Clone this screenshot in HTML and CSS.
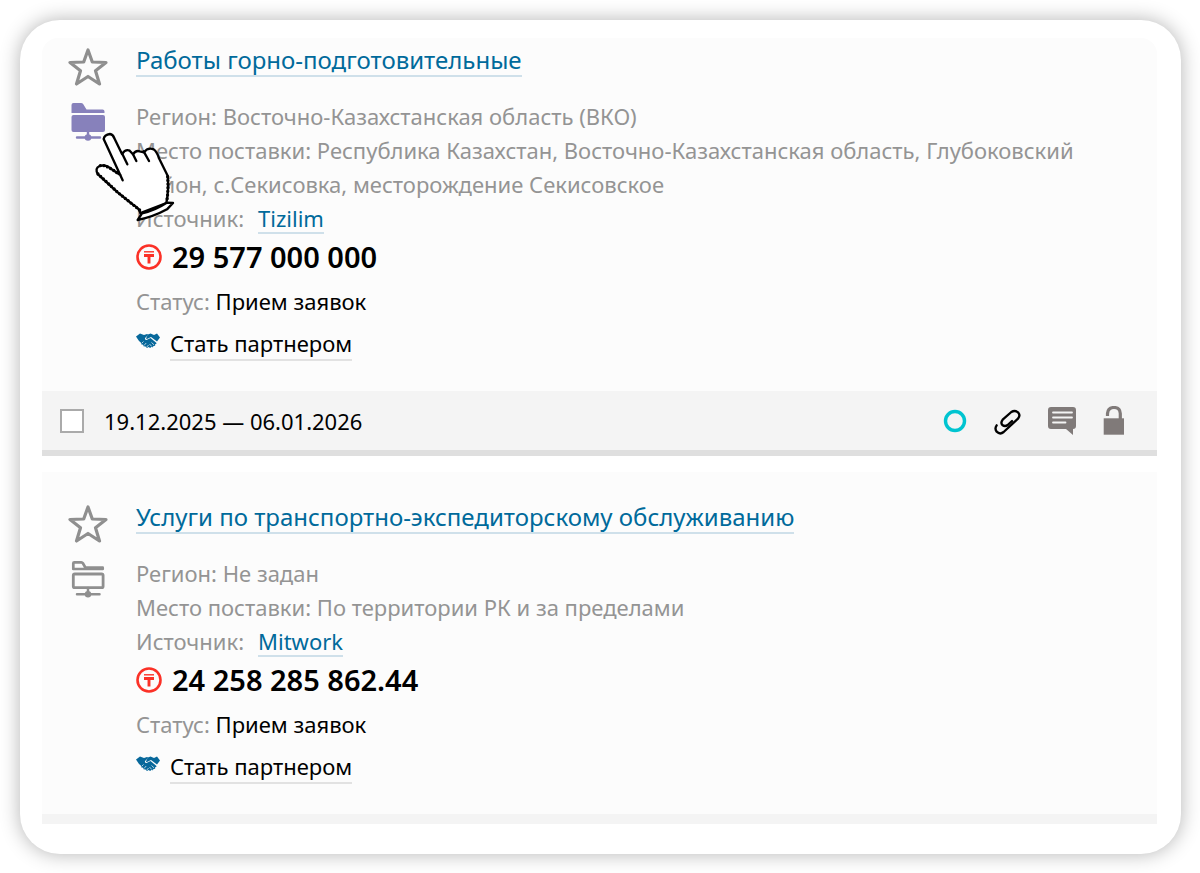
FILE: index.html
```html
<!DOCTYPE html>
<html lang="ru">
<head>
<meta charset="utf-8">
<meta name="viewport" content="width=device-width, initial-scale=1">
<title>Тендеры</title>
<link rel="stylesheet" href="styles.css">
</head>
<body>
<svg class="sprite" aria-hidden="true">
  <symbol id="star" viewBox="0 0 40 38">
    <path d="M20 2 24.300 14 38 14.500 27.500 22.800 31.500 36 20 28.500 8.500 36 12.500 22.800 2 14.500 15.700 14Z" fill="none" stroke="currentColor" stroke-width="3.200" stroke-linejoin="round"/>
  </symbol>
  <symbol id="folder" viewBox="0 0 36 40">
    <path d="M3.300 9.500V4.300q0-1 1-1h7q1 0 1.600 1l2.600 4.400H32.700v1.300H3.300Z" fill="none" stroke="currentColor" stroke-width="2.700" stroke-linejoin="round"/>
    <rect x="3.300" y="15" width="29.800" height="13.700" rx="1.500" fill="none" stroke="currentColor" stroke-width="2.800"/>
    <path d="M18 29v5M7 35.300h22.500" stroke="currentColor" stroke-width="2.500" stroke-linecap="round"/>
    <circle cx="18" cy="35.300" r="3.200" fill="currentColor"/>
  </symbol>
  <symbol id="folder-full" viewBox="0 0 36 40">
    <path d="M1.500 11V3q0-2 2-2h7.500q1.500 0 2.300 1.300L16.500 7.500h16q2 0 2 2V11Z" fill="currentColor"/>
    <rect x="1.500" y="13" width="33.500" height="17" rx="2" fill="currentColor"/>
    <path d="M18 29v5M7 35.500h23" stroke="currentColor" stroke-width="2.400" stroke-linecap="round"/>
    <circle cx="18" cy="35.500" r="3.300" fill="currentColor"/>
  </symbol>
  <symbol id="tenge" viewBox="0 0 26 26">
    <circle cx="13" cy="13" r="11.500" fill="none" stroke="currentColor" stroke-width="2.600"/>
    <path d="M8 7.800h10" stroke="currentColor" stroke-width="1.400"/>
    <path d="M8 11.500h10M13 11v8.500" stroke="currentColor" stroke-width="2.900"/>
  </symbol>
  <symbol id="hands" viewBox="0 0 24 16">
    <path d="M0 3.500 4 .5l4 1.500 3-1 1.500.7L9 5q-.5 2 1.500 2l4-2 6 5q0 1.500-1.500 1.300l.2 1.400-1.800.2-.4 1.300-1.800-.2-1 1-1.700-1-1.500 1-1.500-1.500-2-.3-.4-1.500-2-.5-.3-1.700L3 8Z" fill="currentColor"/>
    <path d="m12 1.500 2.500-1L18 2l3-1.500L24 4.500l-3 4L15 4l-4 2q-1.500 0-.7-1.300Z" fill="currentColor"/>
    <path d="m5.500 10.500 2-2M8 12.500l2.200-2.500M10.800 14l1.700-2M13.500 11l2.300 2.500M15.500 9.500l2.500 2.300" stroke="#fcfcfc" stroke-width=".7"/>
  </symbol>
</svg>

<main class="panel">
  <article class="tender tender-first">
    <div class="tender-body">
      <div class="tools">
        <button class="tool" type="button" aria-label="В избранное"><svg class="star"><use href="#star"/></svg></button>
        <button class="tool tool-active" type="button" aria-label="Добавить в папку"><svg class="folder"><use href="#folder-full"/></svg></button>
      </div>
      <div class="info">
        <h2 class="title"><a class="link" href="#">Работы горно-подготовительные</a></h2>
        <p class="line">Регион: Восточно-Казахстанская область (ВКО)</p>
        <p class="line">Место поставки: Республика Казахстан, Восточно-Казахстанская область, Глубоковский район, с.Секисовка, месторождение Секисовское</p>
        <p class="line source"><span>Источник:</span><a class="link" href="#">Tizilim</a></p>
        <p class="price"><svg class="tenge"><use href="#tenge"/></svg><span>29 577 000 000</span></p>
        <p class="status">Статус: <span class="value">Прием заявок</span></p>
        <p class="partner"><svg class="hands"><use href="#hands"/></svg><a class="link link-dark" href="#">Стать партнером</a></p>
      </div>
    </div>
    <footer class="bar">
      <label class="period"><input class="check" type="checkbox"><span>19.12.2025 — 06.01.2026</span></label>
      <div class="actions">
        <button class="action" type="button" aria-label="Статус"><svg width="24" height="24" viewBox="0 0 24 24"><circle cx="12" cy="12" r="9.500" fill="none" stroke="#00c4d0" stroke-width="3.400"/></svg></button>
        <button class="action" type="button" aria-label="Ссылка"><svg width="28" height="28" viewBox="12 18 84 84"><path d="M23 73Q16 83 23 92 33 102 44 93L87 53Q95 43 88 35 78 26 67 33L41 56Q34 65 40 72 48 78 56 72L69 60" fill="none" stroke="#000" stroke-width="7" stroke-linecap="round" stroke-linejoin="round"/></svg></button>
        <button class="action" type="button" aria-label="Комментарии"><svg width="30" height="30" viewBox="0 0 30 30"><path d="M4 1h22q3 0 3 3v16q0 3-3 3v6l-7-6H4q-3 0-3-3V4q0-3 3-3Z" fill="#807a79"/><path d="M6 6.500h19M6 11.500h19M6 16.500h12.500" stroke="#f4f4f4" stroke-width="1.800" stroke-linecap="round"/></svg></button>
        <button class="action" type="button" aria-label="Доступ"><svg width="22" height="30" viewBox="0 0 22 30"><path d="M4.500 10V7.500Q5 1.500 11 1.500T17.300 7.500V13" fill="none" stroke="#807a79" stroke-width="3.200"/><path d="M.7 12.300h20.300v16.400H.7Z" fill="#807a79"/></svg></button>
      </div>
    </footer>
    <svg class="pointer" viewBox="130 300 249 279" aria-hidden="true">
      <g fill="#fff" stroke="#000" stroke-width="7" stroke-linejoin="round" stroke-linecap="round">
        <path d="M219 451 162 327Q164 314 181 312 190 313 194 325L217 372Q228 356 240 362L250 373Q258 360 270 364L283 367Q294 351 312 358 322 365 328 385L354 437Q358 480 350 519L272 549Q269 534 250 524L204 487 145 433Q134 415 150 408 168 402 185 417L213 436"/>
        <path d="m217 370 16 33M250 373l10 20M282 364l16 29" fill="none"/>
        <path d="M264 570 277 550Q318 540 351 518L370 519 352 538Q310 561 264 570Z"/>
        <path d="M145 432 204 487 250 524 270 540M354 440Q357 480 351 515M152 407Q168 402 210 434" fill="none" stroke-width="10" stroke-dasharray="0 11"/>
      </g>
    </svg>
  </article>

  <article class="tender tender-next">
    <div class="tender-body">
      <div class="tools">
        <button class="tool" type="button" aria-label="В избранное"><svg class="star"><use href="#star"/></svg></button>
        <button class="tool" type="button" aria-label="Добавить в папку"><svg class="folder"><use href="#folder"/></svg></button>
      </div>
      <div class="info">
        <h2 class="title"><a class="link" href="#">Услуги по транспортно-экспедиторскому обслуживанию</a></h2>
        <p class="line">Регион: Не задан</p>
        <p class="line">Место поставки: По территории РК и за пределами</p>
        <p class="line source"><span>Источник:</span><a class="link" href="#">Mitwork</a></p>
        <p class="price"><svg class="tenge"><use href="#tenge"/></svg><span>24 258 285 862.44</span></p>
        <p class="status">Статус: <span class="value">Прием заявок</span></p>
        <p class="partner"><svg class="hands"><use href="#hands"/></svg><a class="link link-dark" href="#">Стать партнером</a></p>
      </div>
    </div>
    <div class="bar-edge"></div>
  </article>
</main>
</body>
</html>
```
FILE: styles.css
```css
* { box-sizing: border-box; }

body {
  margin: 0;
  padding: 20px 19px 20px 20px;
  background: #fff;
  color: #000;
  font: 22px/34px "Noto Sans", "Open Sans", sans-serif;
}

h2, p { margin: 0; }

button {
  padding: 0;
  border: 0;
  background: none;
  cursor: pointer;
}

svg { display: block; }

.sprite {
  position: absolute;
  width: 0;
  height: 0;
}

.panel {
  display: flex;
  flex-direction: column;
  gap: 16px;
  padding: 18px 24px 30px 22px;
  border-radius: 40px;
  background: #fff;
  box-shadow: 0 0 20px rgba(0, 0, 0, .3);
}

.tender {
  position: relative;
  background: #fcfcfc;
}

.tender-first { border-radius: 16px 16px 0 0; }

.tender-body {
  display: flex;
  gap: 28px;
  padding: 5px 40px 30px 26px;
}

.tender-next .tender-body { padding-top: 28px; }

.tools {
  display: flex;
  flex: none;
  flex-direction: column;
  align-items: center;
  gap: 16px;
  width: 40px;
  padding-top: 5px;
}

.tool { color: #8f8f8f; }
.tool-active { color: #8781bb; }
.star { width: 40px; height: 38px; }
.folder { width: 36px; height: 40px; }

.info {
  flex: 1;
  min-width: 0;
  color: #949494;
}

.title {
  margin-bottom: 22px;
  font-size: 24px;
  font-weight: 400;
}

.link {
  display: inline-block;
  border-bottom: 2px solid #cfe0ea;
  color: #006a9b;
  line-height: 31px;
  text-decoration: none;
}

.link-dark {
  border-color: #e2e2e2;
  color: #000;
}

.source {
  display: flex;
  align-items: baseline;
  gap: 14px;
}

.source .link { line-height: 28px; }

.price {
  display: flex;
  align-items: center;
  gap: 10px;
  height: 43px;
  color: #000;
  font-size: 29px;
  font-weight: 600;
}

.tenge {
  width: 26px;
  height: 26px;
  color: #fb3127;
}

.status { margin-top: 6px; }
.value { color: #000; }

.partner {
  display: flex;
  gap: 10px;
  margin-top: 10px;
}

.hands {
  width: 24px;
  height: 16px;
  margin-top: 5px;
  color: #07689b;
}

.bar {
  display: flex;
  align-items: center;
  justify-content: space-between;
  height: 65px;
  padding: 0 32px 0 18px;
  border-bottom: 6px solid #dfdfdf;
  background: #f4f4f4;
}

.period {
  display: flex;
  align-items: center;
  gap: 20px;
}

.check {
  width: 24px;
  height: 24px;
  margin: 0;
  border: 2px solid #aaa;
  background: #fff;
  appearance: none;
}

.actions {
  display: flex;
  align-items: center;
  gap: 26px;
}

.bar-edge {
  height: 10px;
  background: #f4f4f4;
}

.pointer {
  position: absolute;
  top: 92px;
  left: 51px;
  width: 83px;
  height: 93px;
}
```
